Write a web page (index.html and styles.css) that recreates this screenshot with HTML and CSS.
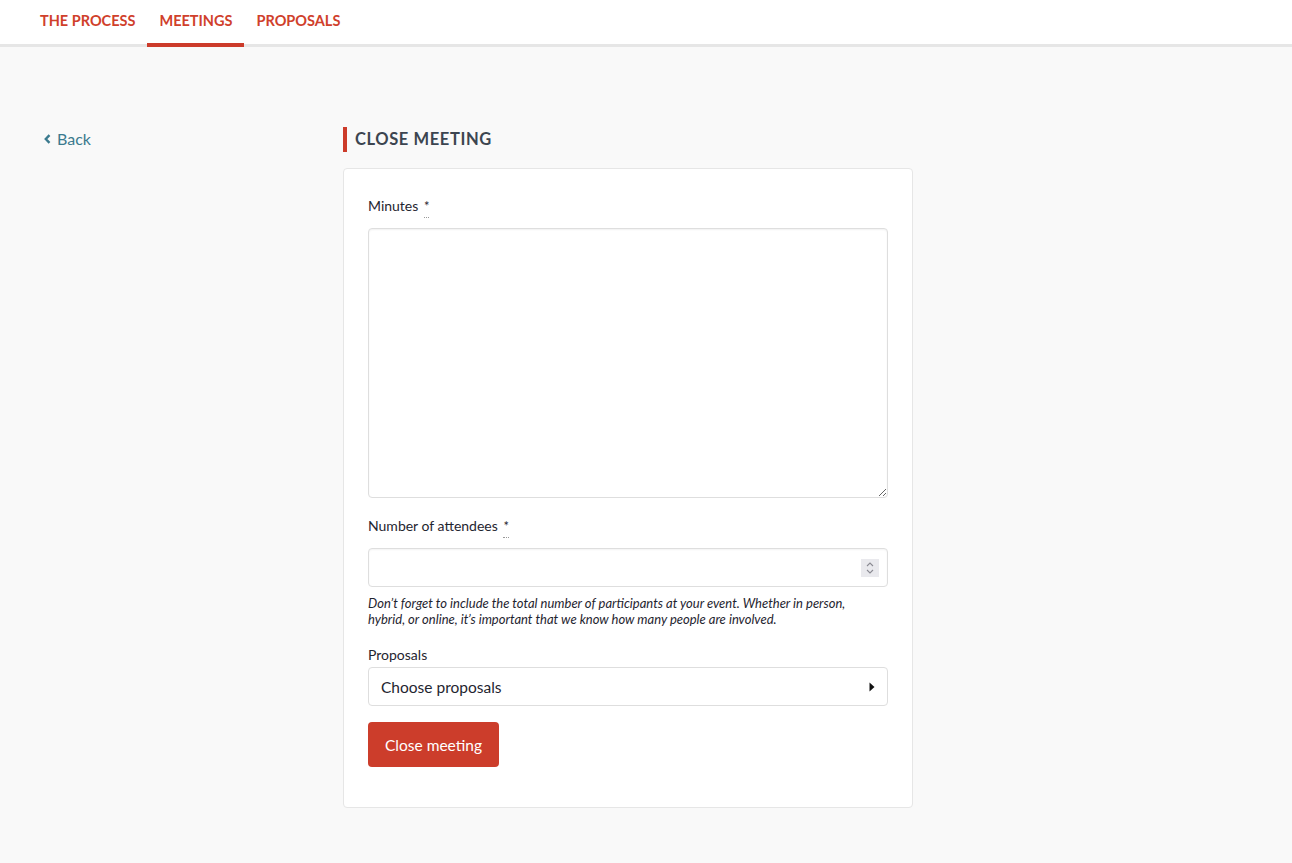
FILE: index.html
```html
<!DOCTYPE html>
<html lang="en">
<head>
<meta charset="utf-8">
<title>Close meeting</title>
<link rel="stylesheet" href="styles.css">
</head>
<body>
<header class="topnav">
  <nav class="tabs">
    <a class="tab" href="#">THE PROCESS</a>
    <a class="tab active" href="#">MEETINGS</a>
    <a class="tab" href="#">PROPOSALS</a>
  </nav>
</header>
<main class="page">
  <aside class="side">
    <a class="back" href="#"><svg class="chev" width="7" height="10" viewBox="0 0 7 10"><path d="M5.5 1.2 L1.8 5 L5.5 8.8" fill="none" stroke="currentColor" stroke-width="2.4"/></svg>Back</a>
  </aside>
  <section class="content">
    <h1 class="title">CLOSE MEETING</h1>
    <form class="card">
      <label class="label">Minutes <abbr class="req">*</abbr></label>
      <textarea class="textarea"></textarea>
      <label class="label mt">Number of attendees <abbr class="req">*</abbr></label>
      <div class="input">
        <span class="spin"><svg width="10" height="14" viewBox="0 0 10 14"><path d="M2 5 L5 2 L8 5 M2 9 L5 12 L8 9" fill="none" stroke="#8a8a92" stroke-width="1.1"/></svg></span>
      </div>
      <p class="help">Don’t forget to include the total number of participants at your event. Whether in person, hybrid, or online, it’s important that we know how many people are involved.</p>
      <label class="label plain">Proposals</label>
      <div class="select">
        <span>Choose proposals</span>
        <svg width="6" height="10" viewBox="0 0 6 10"><path d="M0.5 0.5 L5.5 5 L0.5 9.5 Z" fill="#111"/></svg>
      </div>
      <div class="actions">
        <button type="button" class="btn">Close meeting</button>
      </div>
    </form>
  </section>
</main>
</body>
</html>
```
FILE: styles.css
```css
* { box-sizing: border-box; }
html, body { margin: 0; padding: 0; }
body {
  background: #f9f9f9;
  font-family: "Lato", "Noto Sans", sans-serif;
  color: #1a1a1a;
  min-height: 863px;
}
.topnav {
  background: #fff;
  border-bottom: 3px solid #e6e6e6;
  height: 47px;
}
.tabs {
  display: flex;
  padding-left: 28px;
  height: 44px;
}
.tab {
  display: flex;
  align-items: center;
  padding: 0 12px;
  height: 47px;
  margin-bottom: -3px;
  padding-bottom: 3px;
  color: #d0402b;
  font-weight: 700;
  font-size: 14.5px;
  text-decoration: none;
  border-bottom: 4px solid transparent;
}
.tab.active { border-bottom-color: #cc3b2a; }

.page {
  display: flex;
  padding-top: 80px;
  padding-left: 44px;
}
.side { width: 299px; padding-top: 1px; }
.back {
  display: inline-flex;
  align-items: center;
  gap: 6px;
  color: #3b7a8e;
  text-decoration: none;
  font-size: 16px;
}
.chev { margin-top: 1px; }
.content { width: 570px; }
.title {
  margin: 0 0 16px 0;
  border-left: 4px solid #cc3b2a;
  padding-left: 8px;
  height: 25px;
  line-height: 25px;
  font-size: 16.5px;
  font-weight: 700;
  letter-spacing: 0.6px;
  color: #3c4550;
}
.card {
  background: #fff;
  border: 1px solid #e6e6e6;
  border-radius: 4px;
  padding: 28px 24px 40px 24px;
  display: flex;
  flex-direction: column;
}
.label {
  display: block;
  font-size: 14px;
  color: #1f2530;
  height: 31px;
  line-height: 18px;
}
.label.mt { margin-top: 19px; }
.req {
  text-decoration: none;
  display: inline-block;
  border-bottom: 1px dotted #999;
  line-height: 12px;
  padding-bottom: 5px;
  margin-left: 2px;
  font-size: 13px;
}
.textarea {
  width: 520px;
  height: 270px;
  border: 1px solid #dedede;
  border-radius: 4px;
  box-shadow: inset 0 1px 2px rgba(0,0,0,0.06);
  resize: vertical;
  font: inherit;
}
.input {
  height: 39px;
  border: 1px solid #dedede;
  border-radius: 4px;
  box-shadow: inset 0 1px 2px rgba(0,0,0,0.05);
  display: flex;
  align-items: center;
  justify-content: flex-end;
  padding-right: 8px;
}
.spin {
  width: 18px;
  height: 18px;
  background: #e9e9ed;
  display: flex;
  align-items: center;
  justify-content: center;
}
.help {
  margin: 8px 0 0 0;
  font-size: 13px;
  font-style: italic;
  line-height: 16px;
  color: #1f2530;
  max-width: 490px;
}
.label.plain { margin-top: 19px; height: 21px; }
.select {
  height: 39px;
  border: 1px solid #dedede;
  border-radius: 4px;
  display: flex;
  align-items: center;
  justify-content: space-between;
  padding: 0 12px 0 12px;
  font-size: 15.5px;
  color: #1f2530;
}
.actions { margin-top: 16px; }
.btn {
  background: #cc3d2b;
  color: #fff;
  border: none;
  border-radius: 4px;
  height: 45px;
  padding: 0 17px;
  font-family: inherit;
  font-size: 15.5px;
}
```
